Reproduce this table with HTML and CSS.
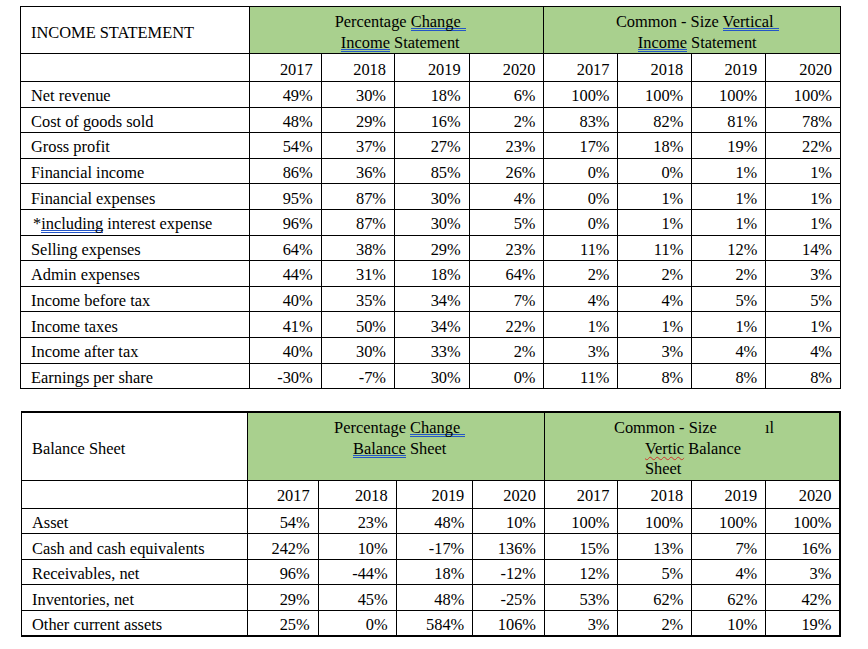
FILE: index.html
```html
<!DOCTYPE html>
<html lang="en">
<head>
<meta charset="utf-8">
<title>Income Statement and Balance Sheet</title>
<link rel="stylesheet" href="styles.css">
</head>
<body>
<table class="fin fin-income">
  <colgroup>
    <col class="w-label1"><col class="w-a1"><col class="w-b1"><col class="w-c1"><col class="w-d1">
    <col class="w-e"><col class="w-f"><col class="w-g"><col class="w-h">
  </colgroup>
  <tr class="hd">
    <td class="title">INCOME STATEMENT</td>
    <td colspan="4" class="green green-left"><div>Percentage <span class="gram gram-tail">Change</span></div><div><span class="gram">Income</span> Statement</div></td>
    <td colspan="4" class="green green-right"><div>Common - Size <span class="gram gram-tail">Vertical</span></div><div><span class="gram">Income</span> Statement</div></td>
  </tr>
  <tr class="yr">
    <td></td>
    <td class="num">2017</td><td class="num">2018</td><td class="num">2019</td><td class="num">2020</td>
    <td class="num">2017</td><td class="num">2018</td><td class="num">2019</td><td class="num">2020</td>
  </tr>
  <tr><td>Net revenue</td><td class="num">49%</td><td class="num">30%</td><td class="num">18%</td><td class="num">6%</td><td class="num">100%</td><td class="num">100%</td><td class="num">100%</td><td class="num">100%</td></tr>
  <tr><td>Cost of goods sold</td><td class="num">48%</td><td class="num">29%</td><td class="num">16%</td><td class="num">2%</td><td class="num">83%</td><td class="num">82%</td><td class="num">81%</td><td class="num">78%</td></tr>
  <tr><td>Gross profit</td><td class="num">54%</td><td class="num">37%</td><td class="num">27%</td><td class="num">23%</td><td class="num">17%</td><td class="num">18%</td><td class="num">19%</td><td class="num">22%</td></tr>
  <tr><td>Financial income</td><td class="num">86%</td><td class="num">36%</td><td class="num">85%</td><td class="num">26%</td><td class="num">0%</td><td class="num">0%</td><td class="num">1%</td><td class="num">1%</td></tr>
  <tr><td>Financial expenses</td><td class="num">95%</td><td class="num">87%</td><td class="num">30%</td><td class="num">4%</td><td class="num">0%</td><td class="num">1%</td><td class="num">1%</td><td class="num">1%</td></tr>
  <tr><td class="sub">*<span class="gram">including</span> interest expense</td><td class="num">96%</td><td class="num">87%</td><td class="num">30%</td><td class="num">5%</td><td class="num">0%</td><td class="num">1%</td><td class="num">1%</td><td class="num">1%</td></tr>
  <tr><td>Selling expenses</td><td class="num">64%</td><td class="num">38%</td><td class="num">29%</td><td class="num">23%</td><td class="num">11%</td><td class="num">11%</td><td class="num">12%</td><td class="num">14%</td></tr>
  <tr><td>Admin expenses</td><td class="num">44%</td><td class="num">31%</td><td class="num">18%</td><td class="num">64%</td><td class="num">2%</td><td class="num">2%</td><td class="num">2%</td><td class="num">3%</td></tr>
  <tr><td>Income before tax</td><td class="num">40%</td><td class="num">35%</td><td class="num">34%</td><td class="num">7%</td><td class="num">4%</td><td class="num">4%</td><td class="num">5%</td><td class="num">5%</td></tr>
  <tr><td>Income taxes</td><td class="num">41%</td><td class="num">50%</td><td class="num">34%</td><td class="num">22%</td><td class="num">1%</td><td class="num">1%</td><td class="num">1%</td><td class="num">1%</td></tr>
  <tr><td>Income after tax</td><td class="num">40%</td><td class="num">30%</td><td class="num">33%</td><td class="num">2%</td><td class="num">3%</td><td class="num">3%</td><td class="num">4%</td><td class="num">4%</td></tr>
  <tr><td>Earnings per share</td><td class="num">-30%</td><td class="num">-7%</td><td class="num">30%</td><td class="num">0%</td><td class="num">11%</td><td class="num">8%</td><td class="num">8%</td><td class="num">8%</td></tr>
</table>

<table class="fin fin-balance">
  <colgroup>
    <col class="w-label2"><col class="w-a2"><col class="w-b2"><col class="w-c2"><col class="w-d2">
    <col class="w-e2"><col class="w-f"><col class="w-g"><col class="w-h">
  </colgroup>
  <tr class="hd hd-tall">
    <td class="title title-bal">Balance Sheet</td>
    <td colspan="4" class="green green-left"><div>Percentage <span class="gram gram-tail">Change</span></div><div><span class="gram">Balance</span> Sheet</div></td>
    <td colspan="4" class="green green-free last"><div class="line1">Common - Size<span class="gap"></span>ıl</div><div class="line2"><span class="spell">Vertic</span> Balance</div><div class="line2">Sheet</div></td>
  </tr>
  <tr class="yr yr2">
    <td></td>
    <td class="num">2017</td><td class="num">2018</td><td class="num">2019</td><td class="num">2020</td>
    <td class="num">2017</td><td class="num">2018</td><td class="num">2019</td><td class="num last">2020</td>
  </tr>
  <tr><td>Asset</td><td class="num">54%</td><td class="num">23%</td><td class="num">48%</td><td class="num">10%</td><td class="num">100%</td><td class="num">100%</td><td class="num">100%</td><td class="num last">100%</td></tr>
  <tr><td>Cash and cash equivalents</td><td class="num">242%</td><td class="num">10%</td><td class="num">-17%</td><td class="num">136%</td><td class="num">15%</td><td class="num">13%</td><td class="num">7%</td><td class="num last">16%</td></tr>
  <tr><td>Receivables, net</td><td class="num">96%</td><td class="num">-44%</td><td class="num">18%</td><td class="num">-12%</td><td class="num">12%</td><td class="num">5%</td><td class="num">4%</td><td class="num last">3%</td></tr>
  <tr><td>Inventories, net</td><td class="num">29%</td><td class="num">45%</td><td class="num">48%</td><td class="num">-25%</td><td class="num">53%</td><td class="num">62%</td><td class="num">62%</td><td class="num last">42%</td></tr>
  <tr class="final"><td>Other current assets</td><td class="num">25%</td><td class="num">0%</td><td class="num">584%</td><td class="num">106%</td><td class="num">3%</td><td class="num">2%</td><td class="num">10%</td><td class="num last">19%</td></tr>
</table>
</body>
</html>
```

FILE: styles.css
```css
html, body {
  margin: 0;
  background: #ffffff;
}

body {
  padding: 6px 0 0 20px;
  font-family: "Liberation Serif", "Times New Roman", serif;
  font-size: 16.4px;
  color: #000000;
}

.fin {
  border-collapse: collapse;
  table-layout: fixed;
}

.fin-income {
  width: 820px;
}

.fin-balance {
  width: 819px;
  margin: 22px 0 0 1px;
}

.w-label1 { width: 229px; }
.w-a1 { width: 71.7px; }
.w-b1 { width: 73.3px; }
.w-c1 { width: 74.7px; }
.w-d1 { width: 74.8px; }
.w-e { width: 74px; }
.w-f { width: 73.8px; }
.w-g { width: 74px; }
.w-h { width: 74.7px; }

.w-label2 { width: 226.3px; }
.w-a2 { width: 70.4px; }
.w-b2 { width: 78px; }
.w-c2 { width: 76.6px; }
.w-d2 { width: 71.7px; }
.w-e2 { width: 73.5px; }

.fin td {
  box-sizing: border-box;
  border: 1px solid #000000;
  height: 25.6px;
  padding: 4px 8px 0 10px;
  vertical-align: middle;
  line-height: normal;
  white-space: nowrap;
  overflow: hidden;
}

.fin .num {
  text-align: right;
}

.fin .sub {
  padding-left: 12px;
}

.fin .hd td {
  height: 46px;
  vertical-align: top;
  line-height: 20.5px;
  padding-top: 5px;
}

.fin .hd td.title {
  padding-top: 16px;
}

.fin .hd-tall td {
  height: 67px;
  padding-top: 5px;
}

.fin .hd-tall td.title-bal {
  padding-top: 26px;
}

.fin .yr td {
  height: 28px;
}

.fin td.green {
  background: #a9d08e;
  text-align: center;
}

.fin td.green-left {
  padding-left: 9px;
  padding-right: 2px;
}

.fin td.green-right {
  padding-left: 12px;
  padding-right: 2px;
}

.fin td.green-free {
  text-align: left;
  padding-left: 0;
  padding-right: 0;
}

.line1 {
  padding-left: 69px;
}

.line2 {
  padding-left: 100px;
}

.gap {
  display: inline-block;
  width: 48px;
}

.gram {
  background:
    linear-gradient(#2456c8, #2456c8) 0 calc(100% - 2px) / 100% 1px no-repeat,
    linear-gradient(#2456c8, #2456c8) 0 100% / 100% 1px no-repeat;
}

.gram-tail {
  padding-right: 5px;
}

.spell {
  text-decoration: underline wavy #d0342c;
  text-decoration-thickness: 1px;
  text-underline-offset: 2px;
}

.fin-balance td.last {
  border-right: 2px solid #000000;
}

.fin-balance .final td {
  border-bottom: 2px solid #000000;
}

.fin-balance .hd td {
  border-top: 2px solid #000000;
}
```
